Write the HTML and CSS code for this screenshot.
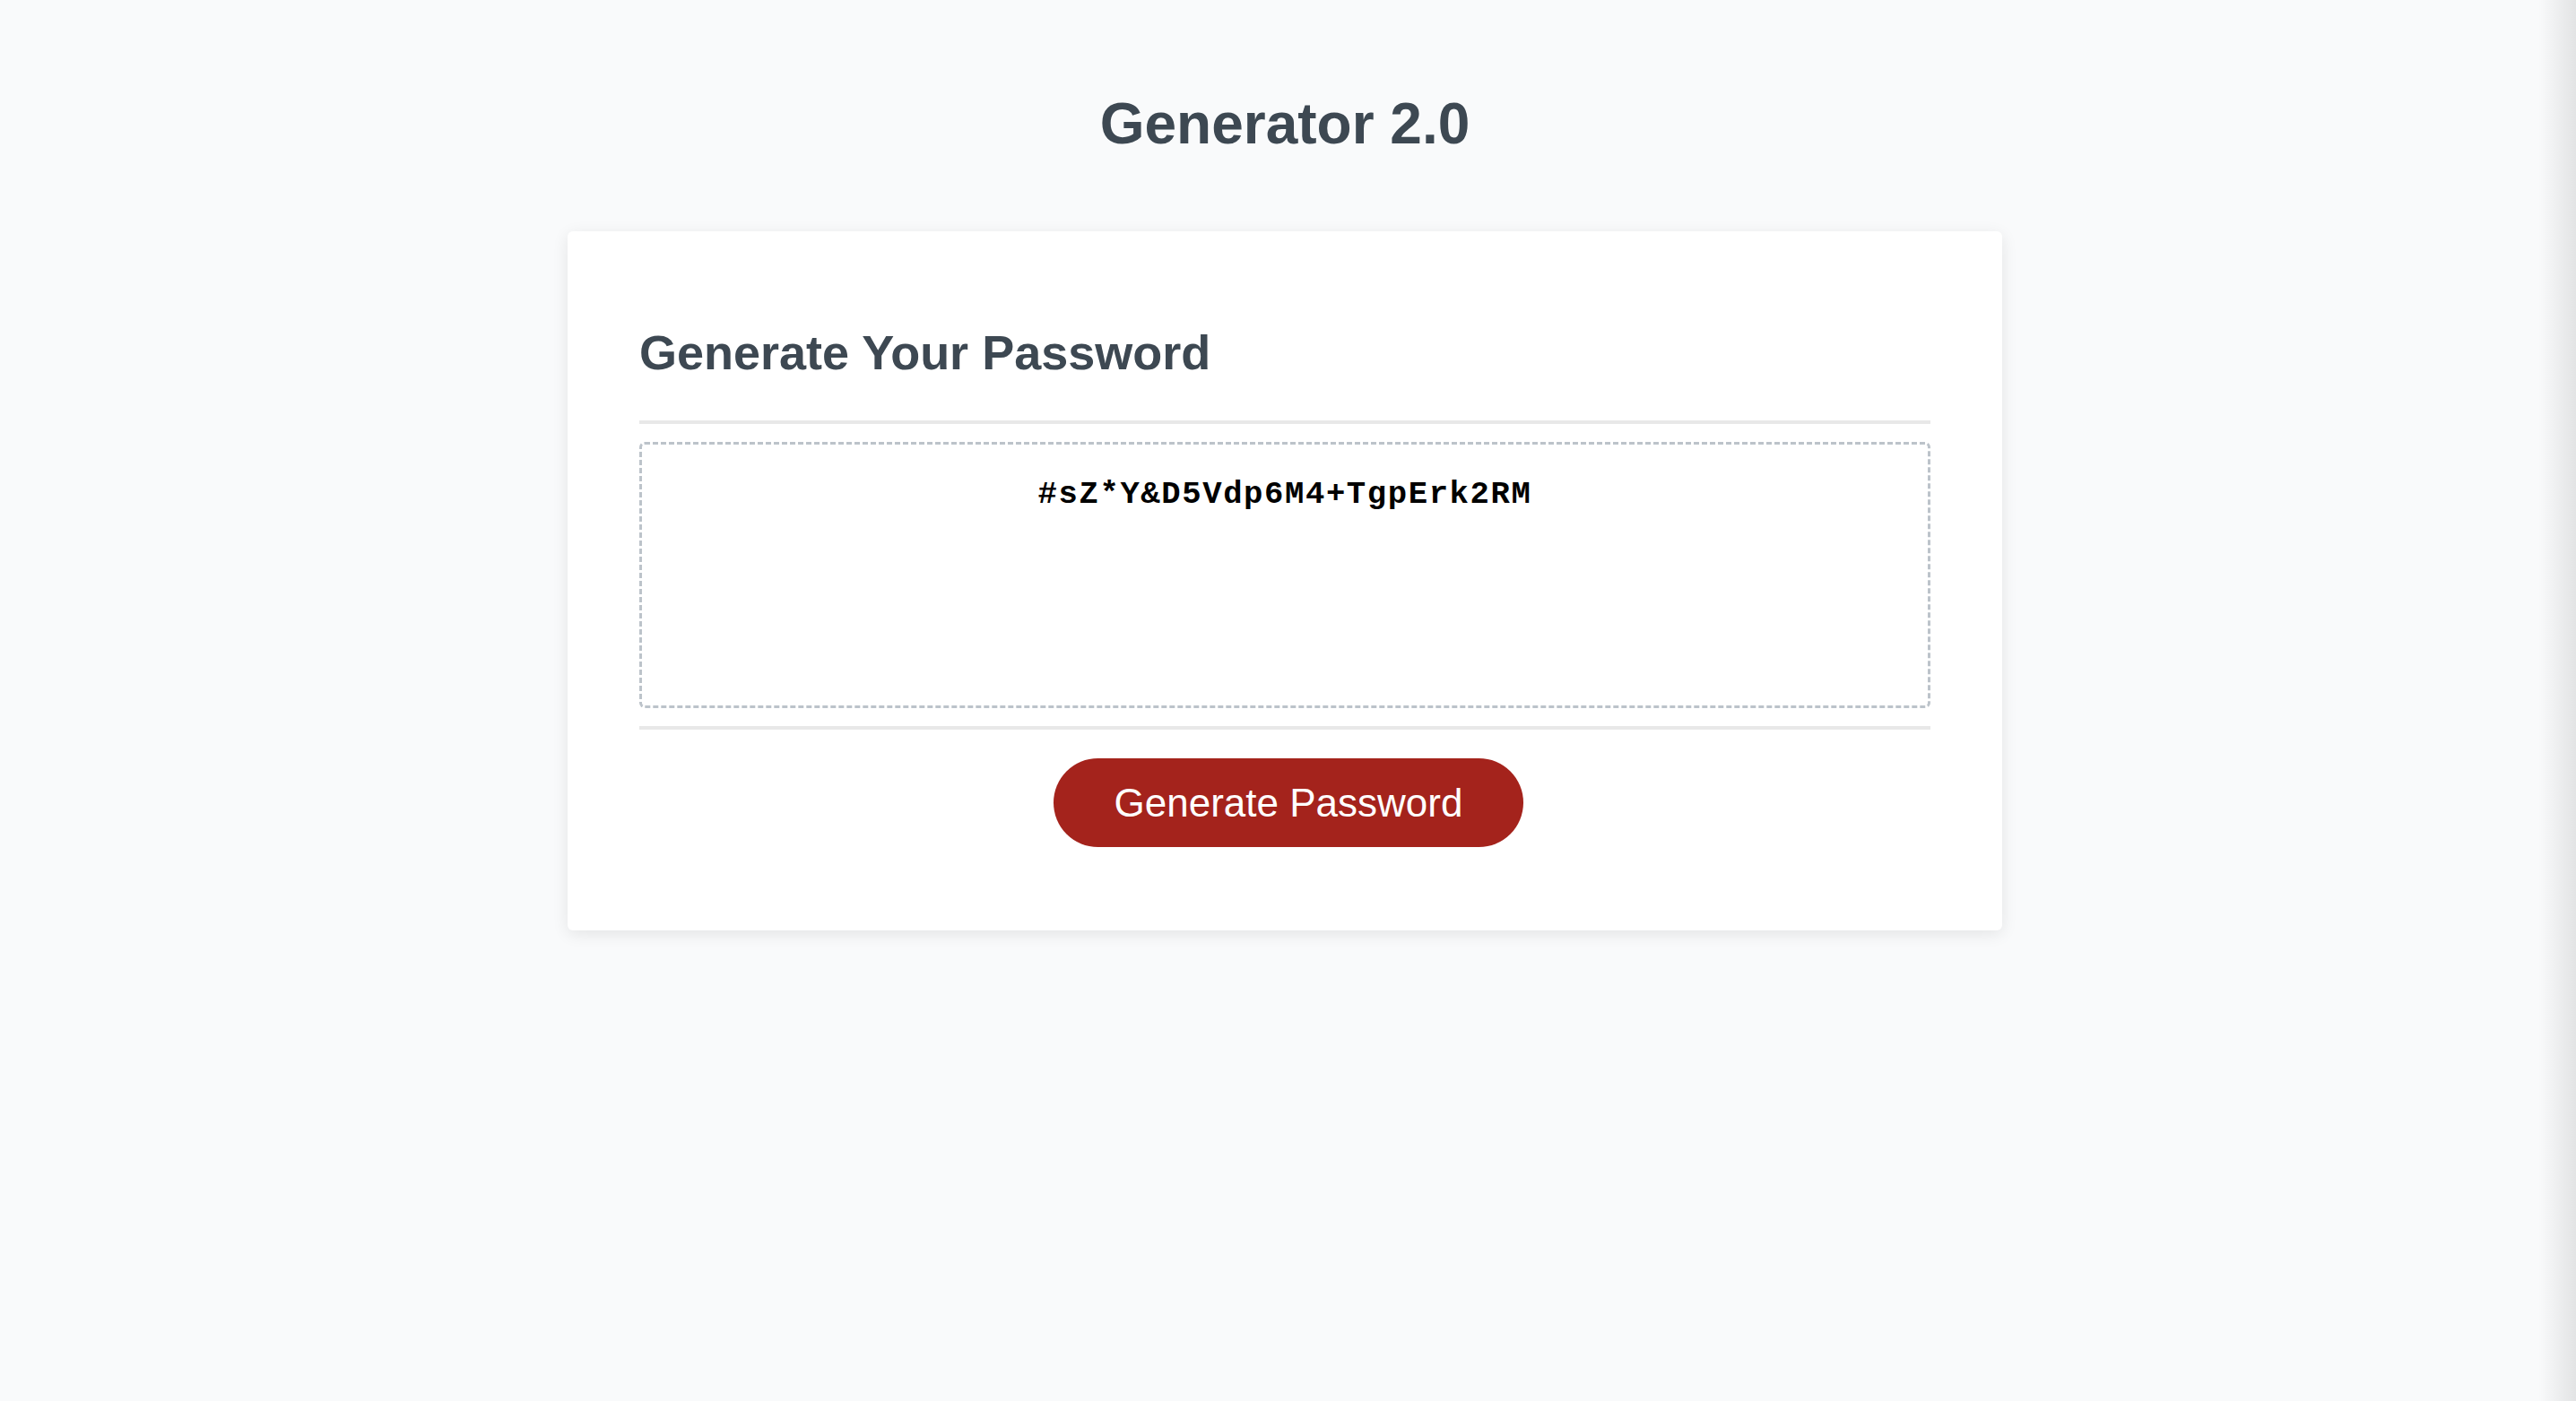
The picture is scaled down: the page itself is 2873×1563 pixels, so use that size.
FILE: index.html
```html
<!DOCTYPE html>
<html lang="en">
<head>
<meta charset="utf-8">
<title>Generator 2.0</title>
<link rel="stylesheet" href="styles.css">
</head>
<body>
  <div class="page">
    <h1 class="title">Generator 2.0</h1>
    <div class="card">
      <h2 class="card-title">Generate Your Password</h2>
      <div class="rule"></div>
      <div class="password" role="textbox" aria-readonly="true" aria-label="Generated Password">#sZ*Y&amp;D5Vdp6M4+TgpErk2RM</div>
      <div class="rule"></div>
      <div class="actions">
        <button class="btn" type="button">Generate Password</button>
      </div>
    </div>
  </div>
</body>
</html>
```

FILE: styles.css
```css
html, body {
  margin: 0;
  padding: 0;
}

body {
  min-height: 100vh;
  background-color: #f9fafb;
  background-image: linear-gradient(to right, rgba(0,0,0,0) calc(100% - 42px), rgba(0,0,0,0.09) 100%);
  font-family: "Liberation Sans", Arial, sans-serif;
}

.page {
  padding: 102px 7px 0 0;
  display: flex;
  flex-direction: column;
  align-items: center;
}

.title {
  margin: 0;
  font-size: 64px;
  line-height: 72px;
  font-weight: 700;
  color: #3d4852;
  text-align: center;
}

.card {
  box-sizing: border-box;
  width: 1600px;
  margin-top: 84px;
  padding: 104px 80px 93px;
  background: #ffffff;
  border-radius: 6px;
  box-shadow: 0 4px 18px rgba(0, 0, 0, 0.09);
  display: flex;
  flex-direction: column;
}

.card-title {
  margin: 0 0 45px;
  font-size: 54px;
  line-height: normal;
  font-weight: 700;
  color: #3d4852;
}

.rule {
  height: 4px;
  background: #e8e8e8;
}

.password {
  box-sizing: border-box;
  height: 297px;
  margin: 20px 0;
  padding: 35px 20px 31px;
  border: 3px dashed #bcc3ca;
  border-radius: 6px;
  background: #ffffff;
  color: #000000;
  font-family: "Liberation Mono", "Courier New", monospace;
  font-weight: 700;
  font-size: 35.6px;
  letter-spacing: 1.6px;
  line-height: normal;
  text-align: center;
  overflow: hidden;
}

.actions {
  display: flex;
  justify-content: center;
  margin-top: 32px;
  padding-left: 8px;
}

.btn {
  height: 99px;
  padding: 0 68px;
  border: none;
  border-radius: 50px;
  background: #a4231c;
  color: #ffffff;
  font-family: "Liberation Sans", Arial, sans-serif;
  font-size: 44px;
  line-height: 1;
  cursor: pointer;
}
```
